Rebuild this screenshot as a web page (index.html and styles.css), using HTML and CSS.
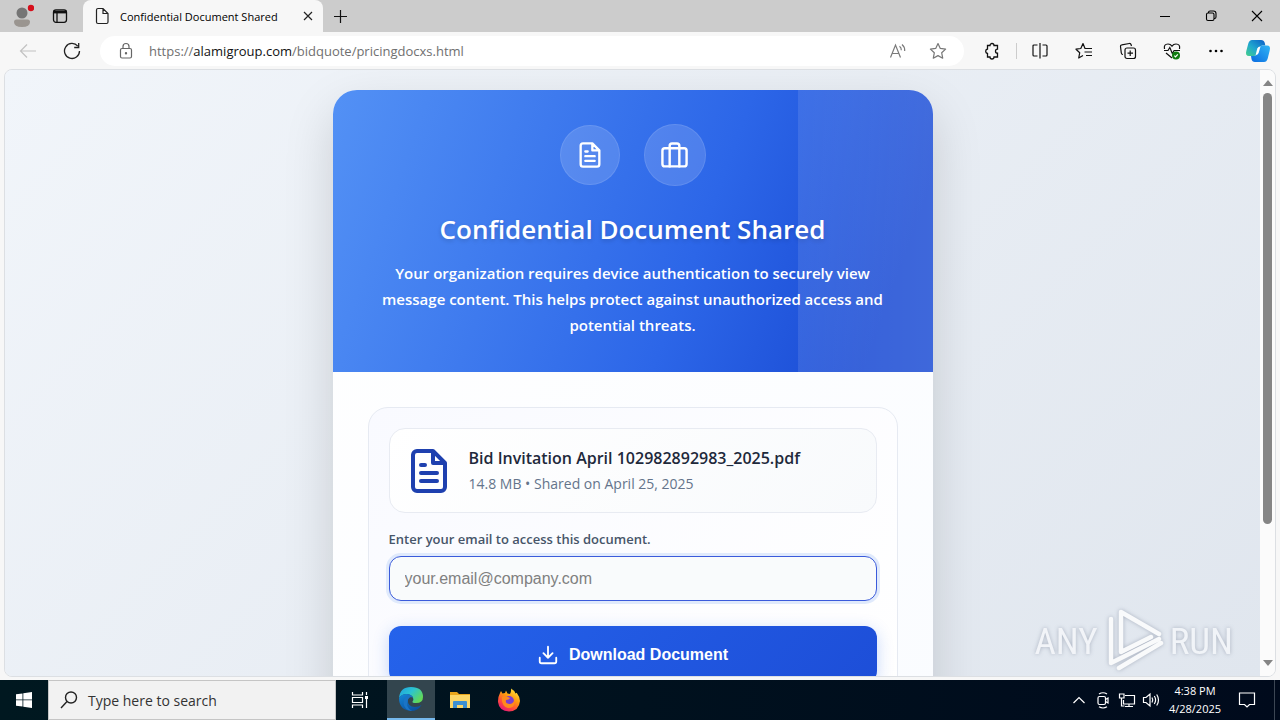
FILE: index.html
```html
<!DOCTYPE html>
<html lang="en">
<head>
    <meta charset="UTF-8">
    <meta name="viewport" content="width=device-width, initial-scale=1.0">
    <title>Confidential Document Shared</title>
    <link rel="stylesheet" href="styles.css">
</head>
<body>
    <div class="browser">
        <div class="tab-bar">
            <button class="profile" aria-label="Profile">
                <svg width="24" height="26" viewBox="0 0 24 26"><circle cx="12" cy="10" r="5.5" fill="#757575"/><path d="M4 19q0-2.500 2.500-2.500h11q2.500 0 2.500 2.500 0 5-8 5t-8-5z" fill="#9a9590"/><circle cx="21" cy="5" r="3.200" fill="#d60f1c"/></svg>
            </button>
            <button class="workspaces" aria-label="Tab actions">
                <svg width="16" height="16" viewBox="0 0 16 16" fill="none" stroke="#111" stroke-width="1.300"><rect x="1.500" y="1.800" width="13" height="12.500" rx="2.500"/><path d="M1.500 4h13" stroke-width="2.800"/><path d="M5 4v10"/></svg>
            </button>
            <div class="tab">
                <svg width="14" height="18" viewBox="0 0 14 18" fill="none" stroke="#222" stroke-width="1.200"><path d="M3 1.500h5l5 5V15q0 1.500-1.500 1.500H3Q1.500 16.500 1.500 15V3Q1.500 1.500 3 1.500zM8 1.500V6.500h5"/></svg>
                <span class="tab-title">Confidential Document Shared</span>
                <button aria-label="Close tab">
                    <svg width="10" height="10" viewBox="0 0 10 10" stroke="#222" stroke-width="1.200"><path d="M1 1l8 8M9 1L1 9"/></svg>
                </button>
            </div>
            <button class="new-tab" aria-label="New tab">
                <svg width="15" height="15" viewBox="0 0 15 15" stroke="#111" stroke-width="1.200"><path d="M7.500 1v13M1 7.500h13"/></svg>
            </button>
            <div class="window-buttons">
                <button aria-label="Minimize"><svg width="12" height="12" viewBox="0 0 12 12" stroke="#000"><path d="M1 6.500h10"/></svg></button>
                <button aria-label="Restore"><svg width="12" height="12" viewBox="0 0 12 12" fill="none" stroke="#000" stroke-width="1.100"><rect x="1.500" y="3" width="7.500" height="7.500" rx="1.500"/><path d="M3.500 3V2.500Q3.500 1 5 1h3.500Q11 1 11 3.500V7Q11 8.500 9.500 8.500H9"/></svg></button>
                <button aria-label="Close"><svg width="12" height="12" viewBox="0 0 12 12" stroke="#000" stroke-width="1.100"><path d="M1 1l10 10M11 1L1 11"/></svg></button>
            </div>
        </div>

        <div class="toolbar">
            <button class="tool" aria-label="Back" disabled>
                <svg width="18" height="16" viewBox="0 0 18 16" fill="none" stroke="#c2c2c2" stroke-width="1.200"><path d="M17 8H2M8 1.500L1.500 8 8 14.500"/></svg>
            </button>
            <button class="tool" aria-label="Refresh">
                <svg width="18" height="18" viewBox="0 0 18 18" fill="none" stroke="#222" stroke-width="1.300"><path d="M16.500 9A7.500 7.500 0 1 1 14.800 4.200M15.700 1v4.500h-4.500"/></svg>
            </button>
            <div class="address">
                <svg class="lock" width="14" height="18" viewBox="0 0 14 18" fill="none" stroke="#666" stroke-width="1.200"><rect x="1.500" y="6.500" width="11" height="9.500" rx="1.500"/><path d="M4 6.500V4.500a3 3 0 0 1 6 0v2"/><circle cx="7" cy="11.300" r=".6" fill="#666"/></svg>
                <span class="url">https://<b>alamigroup.com</b>/bidquote/pricingdocxs.html</span>
                <button aria-label="Read aloud">
                    <svg width="18" height="18" viewBox="0 0 18 18" fill="none" stroke="#7a7a7a" stroke-width="1.200"><path d="M1.500 15.500L6.500 3l5 12.500M3.200 11.500h6.600M10.500 4.200q2 1.500 1.800 4M13 2.500q3 2.500 2.700 6.500" /></svg>
                </button>
                <button aria-label="Favourite">
                    <svg width="18" height="18" viewBox="0 0 18 18" fill="none" stroke="#777" stroke-width="1.200" stroke-linejoin="round"><path d="M9 1.500l2.300 4.900 5.300.7-3.900 3.700 1 5.400L9 13.600l-4.700 2.600 1-5.400L1.400 7.100l5.300-.7z"/></svg>
                </button>
            </div>
            <button class="tool" aria-label="Extensions">
                <svg width="16" height="18" viewBox="0 0 16 18" fill="none" stroke="#111" stroke-width="1.300"><path d="M3.500 3.500h2.500a2 2 0 0 1 4 0h3.500v3.700a2 2 0 1 0 0 4V15H10a2 2 0 0 1-4 0H3.500v-3.500a2.300 2.300 0 0 1 0-4.500z"/></svg>
            </button>
            <span class="divider"></span>
            <button class="tool" aria-label="Split screen">
                <svg width="16" height="18" viewBox="0 0 16 18" fill="none" stroke="#111" stroke-width="1.200"><path d="M5.500 3H2Q1 3 1 4v9q0 1 1 1h3.500M10.500 3H14q1 0 1 1v9q0 1-1 1h-3.500M8 1v15.500"/></svg>
            </button>
            <button class="tool" aria-label="Favourites">
                <svg width="18" height="18" viewBox="0 0 18 18" fill="none" stroke="#111" stroke-width="1.200" stroke-linejoin="round"><path d="M11 6.500H10L8 1.500 5.800 6.500 1 7.200l3.700 3.600-1 5.200L8 13.500M11 6.500h6M9.500 10h7.500M11 13.500h6"/></svg>
            </button>
            <button class="tool" aria-label="Collections">
                <svg width="18" height="18" viewBox="0 0 18 18" fill="none" stroke="#111" stroke-width="1.200"><rect x="6" y="6" width="10.500" height="10.500" rx="2"/><path d="M11.200 8.500v5.500M8.500 11.200H14M4 12.500Q2.500 12.500 2.300 11L1.500 4.500Q1.300 3 2.800 2.800l7.500-1.300q1.500-.2 1.800 1.300l.4 1.200"/></svg>
            </button>
            <button class="tool" aria-label="Browser essentials">
                <svg width="18" height="18" viewBox="0 0 18 18" fill="none" stroke="#111" stroke-width="1.200"><path d="M1.500 7Q.500 2 5 2q2.500 0 4 2.200Q10.500 2 13 2q4.500 0 3.500 5M1 8.500h4l1.800-3 2.500 6 1.800-3H17M3 11l6 5"/><circle cx="13" cy="13.500" r="4" fill="#107c10" stroke="none"/><path d="M11.300 13.600l1.200 1.200 2.300-2.500" stroke="#fff"/></svg>
            </button>
            <button class="tool" aria-label="Settings and more">
                <svg width="16" height="4" viewBox="0 0 16 4"><circle cx="2.500" cy="2" r="1.300"/><circle cx="8" cy="2" r="1.300"/><circle cx="13.500" cy="2" r="1.300"/></svg>
            </button>
            <button class="copilot" aria-label="Copilot">
                <svg width="26" height="24" viewBox="0 0 26 24">
                    <defs>
                        <linearGradient id="cop1" x1="0" y1="1" x2="1" y2="0"><stop offset="0" stop-color="#45d08a"/><stop offset=".45" stop-color="#20a7cf"/><stop offset="1" stop-color="#0b5cc7"/></linearGradient>
                        <linearGradient id="cop2" x1="0" y1="1" x2="1" y2="0"><stop offset="0" stop-color="#0a6be0"/><stop offset="1" stop-color="#31b5f5"/></linearGradient>
                    </defs>
                    <path d="M7 1h9q3 0 3.800 3l.5 2.500h-3q-2.500 0-3.300 2.500l-2 6Q11.200 17 9 17H4Q0 17 1.300 12l2-7.500Q4.300 1 7 1z" fill="url(#cop1)"/>
                    <path d="M19 23h-9q-3 0-3.500-3L6 17h3q2.300 0 3.200-2.500l2-5.500Q15 6.500 17 6.500h5q4 0 2.700 5l-2 8Q21.700 23 19 23z" fill="url(#cop2)"/>
                    <path d="M12.300 9.500Q13 7.500 15.500 7.500L13.600 14q-.7 2-3 2z" fill="#fff"/>
                </svg>
            </button>
        </div>

        <div class="viewport">
            <main class="page">
                <section class="card">
                    <header class="card-header">
                        <div class="badges">
                            <span class="badge">
                                <svg width="28" height="28" viewBox="0 0 24 24"><path d="M14 2H6a2 2 0 0 0-2 2v16a2 2 0 0 0 2 2h12a2 2 0 0 0 2-2V8zM14 2v6h6M16 13H8M16 17H8M10 9H8"/></svg>
                            </span>
                            <span class="badge badge-large">
                                <svg width="29" height="29" viewBox="0 0 24 24"><rect x="2" y="6" width="20" height="15" rx="2"/><path d="M16 21V4a2 2 0 0 0-2-2h-4a2 2 0 0 0-2 2v17"/></svg>
                            </span>
                        </div>
                        <h1>Confidential Document Shared</h1>
                        <p>Your organization requires device authentication to securely view message content. This helps protect against unauthorized access and potential threats.</p>
                    </header>
                    <div class="card-body">
                        <form class="panel">
                            <div class="file">
                                <svg width="48" height="48" viewBox="0 0 24 24"><path d="M14 2H6a2 2 0 0 0-2 2v16a2 2 0 0 0 2 2h12a2 2 0 0 0 2-2V8zM14 2v6h6M16 13H8M16 17H8M10 9H8"/></svg>
                                <div>
                                    <div class="file-name">Bid Invitation April 102982892983_2025.pdf</div>
                                    <div class="file-meta">14.8 MB • Shared on April 25, 2025</div>
                                </div>
                            </div>
                            <label for="email">Enter your email to access this document.</label>
                            <input type="email" id="email" placeholder="your.email@company.com">
                            <button type="button" class="download">
                                <svg width="22" height="22" viewBox="0 0 24 24"><path d="M21 15v4a2 2 0 0 1-2 2H5a2 2 0 0 1-2-2v-4M7 10l5 5 5-5M12 15V3"/></svg>
                                Download Document
                            </button>
                        </form>
                    </div>
                </section>
            </main>
            <div class="scrollbar">
                <svg width="10" height="6" viewBox="0 0 10 6"><path d="M5 0l5 6H0z" fill="#858585"/></svg>
                <div class="track"><div class="thumb"></div></div>
                <svg width="10" height="6" viewBox="0 0 10 6"><path d="M0 0h10L5 6z" fill="#858585"/></svg>
            </div>
        </div>
    </div>

    <div class="watermark">
        <span>ANY</span>
        <svg width="60" height="66" viewBox="0 0 60 66" fill="none" stroke="#fff" stroke-width="4.500" stroke-linecap="round" stroke-linejoin="round"><path d="M17 44V4l38 22M17 20v24l30-15M7 11v44l48-24M15 60l42-25" /></svg>
        <span>RUN</span>
    </div>

    <div class="taskbar">
        <button class="task" aria-label="Start">
            <svg width="16" height="16" viewBox="0 0 16 16" fill="#fff"><path d="M0 2.300L6.500 1.400v6.100H0zM7.300 1.300L16 0v7.500H7.300zM0 8.300h6.500v6.300L0 13.700zM7.300 8.300H16V16l-8.700-1.200z"/></svg>
        </button>
        <button class="search">
            <svg width="18" height="18" viewBox="0 0 18 18" fill="none" stroke="#222" stroke-width="1.400"><circle cx="11" cy="6.500" r="5.500"/><path d="M7 10.500L1 17"/></svg>
            Type here to search
        </button>
        <button class="task" aria-label="Task view">
            <svg width="18" height="18" viewBox="0 0 18 18" fill="none" stroke="#fff" stroke-width="1.200"><path d="M1.500 1v3h10V1M1.500 17v-3h10v3M1.500 6.500h10v5h-10zM15.500 1v3M15.500 8v9"/><path d="M14 5h3v3h-3z" fill="#fff" stroke="none"/></svg>
        </button>
        <button class="task active" aria-label="Microsoft Edge">
            <svg width="26" height="26" viewBox="0 0 26 26">
                <defs>
                    <linearGradient id="edgeTop" x1="0" y1="0" x2="1" y2=".6"><stop offset="0" stop-color="#1f9fe0"/><stop offset=".5" stop-color="#2bc3d2"/><stop offset="1" stop-color="#62d957"/></linearGradient>
                    <linearGradient id="edgeLow" x1="0" y1="0" x2=".7" y2="1"><stop offset="0" stop-color="#1487d8"/><stop offset="1" stop-color="#0b4f9e"/></linearGradient>
                </defs>
                <path d="M1 12Q2 1 13 1q12 0 12 10 0 6-7 6-4 0-3.500-1.500Q16 14 15 11.500 13 8 8.500 8 4 8 1 12z" fill="url(#edgeTop)"/>
                <path d="M1 12q2.500-4 7.500-4 5 0 6.500 3.500Q11 9.500 9.800 14q-.3 7 7.200 7 3.500 0 6.500-2Q20 25 13 25 1 24 1 12z" fill="url(#edgeLow)"/>
                <path d="M9.800 14q-3 7 4.200 11Q6 24 5.500 17 5.300 10.500 11 9.500q3 0 4 2Q11 10 9.800 14z" fill="#1b74c5"/>
            </svg>
        </button>
        <button class="task" aria-label="File Explorer">
            <svg width="22" height="20" viewBox="0 0 22 20"><path d="M1 2h7l2 2h11v14H1z" fill="#e9a51b"/><path d="M1 5h20v13H1z" fill="#fcd667"/><path d="M4 18v-6q0-1 1-1h12q1 0 1 1v6h-4v-3H8v3z" fill="#3d8fd1"/></svg>
        </button>
        <button class="task" aria-label="Firefox">
            <svg width="24" height="24" viewBox="0 0 24 24">
                <defs><linearGradient id="fox" x1=".8" y1="0" x2=".2" y2="1"><stop offset="0" stop-color="#ffe83d"/><stop offset=".4" stop-color="#ff980e"/><stop offset=".7" stop-color="#ff4a3d"/><stop offset="1" stop-color="#e0127f"/></linearGradient></defs>
                <path d="M3 5l1-2 1.500 2.500L8 5l1-2.500 1.500 3L13 6q1.500-3 1-5.500 3 1.500 4.500 5l1.200-.8Q23 9 23 13q-1 10-11 10.500Q2 23 1 14 .8 9 3 5z" fill="url(#fox)"/>
                <circle cx="12" cy="13" r="5" fill="#7a3fd0"/>
                <path d="M5 9q3-2 6 0l2 1q-1 2-4 2-1 4 4 4 4-1 4-4 2 8-6 8-7-2-6-11z" fill="#ff8a1c"/>
            </svg>
        </button>
        <div class="tray">
            <svg width="24" height="18" viewBox="0 0 24 18" fill="none" stroke="#fff" stroke-width="1.200"><path d="M6.500 12L12 6.500l5.500 5.500"/></svg>
            <svg width="24" height="18" viewBox="0 0 24 18" fill="none" stroke="#fff" stroke-width="1.200"><rect x="7" y="5.500" width="7.500" height="8" rx="1.500"/><path d="M14.500 8.500L17 7v5l-2.500-1.500M8 3q4-2.500 8 0M8 15.800q4 2.400 8 0"/></svg>
            <svg width="24" height="18" viewBox="0 0 24 18" fill="none" stroke="#fff" stroke-width="1.200"><path d="M10 4.500h9.500v8.500h-11V9M14 13v2.500M10 15.500h8M4.500 3h4.500v4h-4.500zM6.500 7v8h3"/></svg>
            <svg width="24" height="18" viewBox="0 0 24 18" fill="none" stroke="#fff" stroke-width="1.200"><path d="M4.500 6.500H7l4-3.500v12L7 11.500H4.500zM13 6.500q1.500 2.500 0 5M15.300 5q2.600 4 0 8M17.700 3.500q3.600 5.500 0 11"/></svg>
            <div class="clock"><span>4:38 PM</span><span>4/28/2025</span></div>
            <button class="notifications" aria-label="Notifications">
                <svg width="18" height="18" viewBox="0 0 18 18" fill="none" stroke="#fff" stroke-width="1.200"><path d="M1.500 2h15v11.500h-5L9 16l-2.500-2.500h-5z"/></svg>
            </button>
        </div>
    </div>
</body>
</html>
```
FILE: styles.css
```css
* {
    box-sizing: border-box;
}

body {
    margin: 0;
    height: 100vh;
    display: flex;
    flex-direction: column;
    overflow: hidden;
    position: relative;
    font-family: "Open Sans", "Noto Sans", sans-serif;
    background: #f7f7f7;
}

button {
    border: none;
    background: none;
    padding: 0;
    font-family: inherit;
    display: flex;
    align-items: center;
    justify-content: center;
}

svg {
    flex-shrink: 0;
}

.browser {
    flex: 1;
    min-height: 0;
    display: flex;
    flex-direction: column;
    background: #f7f7f7;
}

/* tabs */
.tab-bar {
    height: 32px;
    flex-shrink: 0;
    display: flex;
    background: #ccc;
}

.profile {
    width: 44px;
}

.workspaces {
    width: 32px;
    margin-right: 7px;
}

.tab {
    width: 240px;
    display: flex;
    align-items: center;
    padding: 0 10px 0 12px;
    background: #f7f7f7;
    border-radius: 8px 8px 0 0;
}

.tab-title {
    flex: 1;
    margin-left: 11px;
    font-size: 11px;
    white-space: nowrap;
    color: #000;
}

.new-tab {
    width: 34px;
}

.window-buttons {
    display: flex;
    margin-left: auto;
}

.window-buttons button {
    width: 46px;
}

/* address row */
.toolbar {
    height: 37px;
    flex-shrink: 0;
    display: flex;
    align-items: center;
    padding: 0 2px 0 6px;
}

.tool {
    width: 44px;
    height: 30px;
}

.address {
    flex: 1;
    height: 30px;
    margin: 0 6px;
    padding: 0 6px 0 19px;
    display: flex;
    align-items: center;
    background: #fff;
    border-radius: 15px;
}

.address button {
    width: 40px;
    height: 30px;
}

.url {
    flex: 1;
    margin-left: 16px;
    font-size: 13px;
    color: #707070;
}

.url b {
    font-weight: 400;
    color: #111;
}

.divider {
    width: 1px;
    height: 16px;
    margin: 0 1px 0 2px;
    background: #ccc;
}

.copilot {
    width: 40px;
}

/* page */
.viewport {
    flex: 1;
    min-height: 0;
    margin: 0 4px 3px;
    display: flex;
    overflow: hidden;
    border: 1px solid #dcdfe3;
    border-radius: 8px;
}

.page {
    flex: 1;
    overflow: hidden;
    padding: 20px;
    background: linear-gradient(135deg, #f1f5fa 0%, #e0e6ee 100%);
}

.card {
    max-width: 600px;
    margin: 0 auto;
    background: linear-gradient(135deg, #fff, #fafcff);
    border-radius: 24px;
    box-shadow: 0 20px 50px rgba(0, 0, 0, 0.15);
}

.card-header {
    position: relative;
    padding: 34px 40px;
    text-align: center;
    color: #fff;
    background: linear-gradient(110deg, #5391f5 0%, #2c66e8 60%, #1a4bd4 90%);
    border-radius: 24px 24px 0 0;
    overflow: hidden;
}

/* lighter strip along the right side */
.card-header::after {
    content: "";
    position: absolute;
    top: 0;
    right: 0;
    bottom: 0;
    width: 135px;
    background: linear-gradient(90deg, rgba(255, 255, 255, 0.1), rgba(255, 255, 255, 0.16));
}

.badges {
    display: flex;
    justify-content: center;
    align-items: center;
    gap: 24px;
}

.badge {
    width: 60px;
    height: 60px;
    display: flex;
    align-items: center;
    justify-content: center;
    border: 1px solid rgba(255, 255, 255, 0.1);
    border-radius: 50%;
    background: rgba(255, 255, 255, 0.15);
}

.badge-large {
    width: 62px;
    height: 62px;
}

.badge svg,
.file svg,
.download svg {
    fill: none;
    stroke: currentColor;
    stroke-width: 2;
    stroke-linecap: round;
    stroke-linejoin: round;
}

h1 {
    margin: 24px 0 12px;
    font-size: 26px;
    line-height: 38px;
    font-weight: 600;
    text-shadow: 0 2px 4px rgba(0, 0, 0, 0.15);
}

.card-header p {
    margin: 0;
    font-size: 15px;
    line-height: 26px;
    font-weight: 600;
}

.card-body {
    padding: 35px;
}

.panel {
    padding: 20px;
    border: 1px solid #e6eaf2;
    border-radius: 20px;
    background: linear-gradient(135deg, #f9faff, #fff);
}

.file {
    display: flex;
    align-items: center;
    gap: 16px;
    height: 85px;
    margin-bottom: 16px;
    padding: 0 15px;
    border: 1px solid #e8ebf2;
    border-radius: 16px;
    background: linear-gradient(135deg, #fff, #f8fafc);
    color: #1e40af;
}

.file-name {
    font-size: 16px;
    line-height: 26px;
    font-weight: 600;
    color: #1e293b;
}

.file-meta {
    font-size: 14px;
    line-height: 26px;
    color: #64748b;
}

label {
    display: block;
    margin-bottom: 7px;
    font-size: 13px;
    line-height: 20px;
    font-weight: 600;
    color: #475569;
}

input {
    display: block;
    width: 100%;
    height: 45px;
    padding: 0 15px;
    border: 1px solid #3b5bdb;
    border-radius: 12px;
    background: #f9fbfc;
    box-shadow: 0 0 0 3px #e0eafc;
    font-family: "Liberation Sans", Arial, sans-serif;
    font-size: 16px;
    outline: none;
}

input::placeholder {
    color: #808080;
}

.download {
    width: 100%;
    height: 57px;
    margin-top: 25px;
    gap: 10px;
    border-radius: 12px;
    background: linear-gradient(135deg, #2563eb, #1d4ed8);
    box-shadow: 0 4px 16px rgba(37, 99, 235, 0.25);
    color: #fff;
    font-family: "Liberation Sans", Arial, sans-serif;
    font-size: 16px;
    font-weight: 600;
}

.scrollbar {
    width: 15px;
    padding: 10px 0;
    display: flex;
    flex-direction: column;
    align-items: center;
    background: #fbfbfb;
}

.track {
    flex: 1;
    margin: 7px 0;
}

.thumb {
    width: 9px;
    height: 77%;
    border-radius: 5px;
    background: #858585;
}

/* watermark lies over the page */
.watermark {
    position: absolute;
    right: 47px;
    bottom: 46px;
    display: flex;
    align-items: center;
    gap: 6px;
    font-family: "Liberation Sans Narrow", "Roboto Condensed", "Open Sans Condensed", "Liberation Sans", sans-serif;
    font-size: 37px;
    color: #f6f8fb;
    opacity: 0.8;
    filter: drop-shadow(0 0 2px #9ba3b3);
    pointer-events: none;
}

/* taskbar */
.taskbar {
    height: 40px;
    flex-shrink: 0;
    display: flex;
    background: linear-gradient(90deg, #001820, #000a1c);
}

.task {
    width: 48px;
    margin-right: 1px;
}

.task:first-child {
    margin-right: 0;
}

.task.active {
    margin-left: 2px;
    background: #33454e;
    border-bottom: 2px solid #76b9ed;
}

.search {
    width: 288px;
    justify-content: flex-start;
    gap: 10px;
    padding-left: 11px;
    background: #f2f2f2;
    border: 1px solid #c5c5c5;
    font-size: 14px;
    color: #333;
}

.tray {
    display: flex;
    align-items: center;
    margin-left: auto;
    padding-right: 5px;
    color: #fff;
}

.clock {
    width: 64px;
    display: flex;
    flex-direction: column;
    align-items: center;
    font-size: 11px;
    line-height: 18px;
}

.notifications {
    width: 48px;
    height: 40px;
    padding-right: 8px;
    border-right: 1px solid #3c4654;
}
```
